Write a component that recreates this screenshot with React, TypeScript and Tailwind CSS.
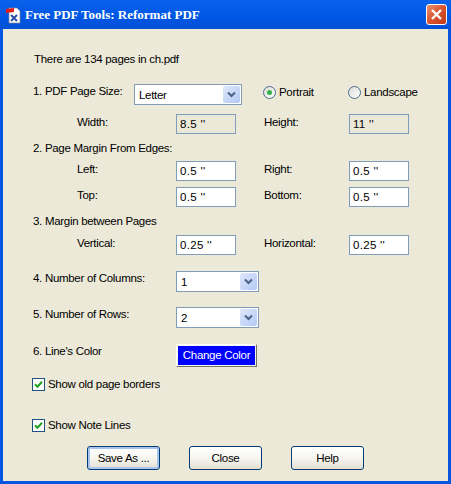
import type { ReactNode } from 'react'

function Arrow() {
  return (
    <span className="flex h-[17px] w-[17px] items-center justify-center rounded-[2px] bg-gradient-to-br from-[#dfe8fb] to-[#b2c8f5]">
      <svg width="9" height="7" viewBox="0 0 9 7">
        <path d="M1 1.5 L4.5 5 L8 1.5" fill="none" stroke="#4d6185" strokeWidth="2" />
      </svg>
    </span>
  )
}

function Select({ value, width }: { value: string; width: string }) {
  return (
    <div className={`flex h-[21px] items-center justify-between border border-[#7f9db9] bg-white pl-[4px] pr-[1px] ${width}`}>
      <span>{value}</span>
      <Arrow />
    </div>
  )
}

function Field({ value, disabled }: { value: string; disabled?: boolean }) {
  return (
    <div className={`flex h-[20px] w-[60px] items-center border border-[#7f9db9] pl-[3px] tracking-[0.3px] ${disabled ? 'bg-[#ebe8d8]' : 'bg-white'}`}>
      {value}
    </div>
  )
}

function Radio({ checked, label, width }: { checked?: boolean; label: string; width: string }) {
  return (
    <div className={`flex items-center gap-[3px] ${width}`}>
      <span className="flex h-[13px] w-[13px] shrink-0 items-center justify-center rounded-full border border-[#4e6b8f] bg-gradient-to-br from-[#dcdcd5] to-white">
        {checked && <span className="h-[5px] w-[5px] rounded-full bg-[#35b04a]" />}
      </span>
      <span>{label}</span>
    </div>
  )
}

function Check({ label, className }: { label: string; className: string }) {
  return (
    <div className={`flex h-[14px] items-center gap-[3px] pl-[29px] ${className}`}>
      <span className="flex h-[13px] w-[13px] items-center justify-center border border-[#1c5180] bg-white">
        <svg width="9" height="9" viewBox="0 0 9 9">
          <path d="M1 4.2 L3.5 6.7 L8 1.8" fill="none" stroke="#21a121" strokeWidth="2" />
        </svg>
      </span>
      <span>{label}</span>
    </div>
  )
}

function FieldRow({ a, b, x, y, className }: { a: string; b: string; x: ReactNode; y: ReactNode; className: string }) {
  return (
    <div className={`flex h-[20px] items-center ${className}`}>
      <span className="mb-[4px] w-[173px] pl-[74px] whitespace-nowrap">{a}</span>
      <span className="w-[60px]">{x}</span>
      <span className="mb-[4px] ml-[28px] w-[85px]">{b}</span>
      {y}
    </div>
  )
}

function Button({ label, focused }: { label: string; focused?: boolean }) {
  return (
    <button className={`h-[24px] w-[73px] rounded-[3px] border border-[#003c74] bg-gradient-to-b from-white via-[#f6f6f0] to-[#e3e0d3] text-black ${focused ? 'shadow-[inset_0_0_0_2px_#a9c4ee]' : ''}`}>
      {label}
    </button>
  )
}

export default function App() {
  return (
    <div className="flex h-[484px] w-[451px] flex-col overflow-hidden bg-[#0555e3] font-['Liberation_Sans',Arial,sans-serif] text-[11.5px] leading-[14px] tracking-[-0.3px] text-black">
      {/* title bar */}
      <div className="flex h-[29px] items-center bg-gradient-to-b from-[#0a62ea] via-[#0058e6] to-[#0350d8] pl-[5px] pr-[4px]">
        <svg width="17" height="18" viewBox="0 0 17 18">
          <path d="M4 2 H12 L15 5 V17 H4 Z" fill="#fff" stroke="#8a8a8a" strokeWidth="0.7" />
          <path d="M1 3 L9 2 V6 L1 7 Z" fill="#e01c1c" />
          <path d="M6 9 L12 15 M12 9 L6 15" stroke="#2a4fa8" strokeWidth="2" />
        </svg>
        <span className="ml-[3px] font-['Liberation_Serif',serif] text-[13px] font-bold tracking-normal text-white">Free PDF Tools: Reformat PDF</span>
        <span className="ml-auto flex h-[21px] w-[21px] items-center justify-center rounded-[3px] border border-white bg-gradient-to-br from-[#e8906f] via-[#d9532c] to-[#c23a16]">
          <svg width="13" height="13" viewBox="0 0 13 13">
            <path d="M2 2 L11 11 M11 2 L2 11" stroke="#fff" strokeWidth="2.4" />
          </svg>
        </span>
      </div>

      {/* dialog body */}
      <div className="mx-[3px] mb-[3px] flex-1 bg-[#ece9d8]">
        <div className="ml-[31px] mt-[23px] h-[14px]">There are 134 pages in ch.pdf</div>

        <div className="mt-[18px] flex h-[21px]">
          <span className="ml-[30px] w-[101px]">1. PDF Page Size:</span>
          <Select value="Letter" width="w-[108px]" />
          <div className="ml-[21px] mt-[1px] flex items-start">
            <Radio checked label="Portrait" width="w-[85px]" />
            <Radio label="Landscape" width="w-[72px]" />
          </div>
        </div>

        <FieldRow className="mt-[9px]" a="Width:" x={<Field value={'8.5 \'\''} disabled />} b="Height:" y={<Field value={'11 \'\''} disabled />} />

        <div className="ml-[30px] mt-[7px] h-[14px]">2. Page Margin From Edges:</div>
        <FieldRow className="mt-[6px]" a="Left:" x={<Field value={'0.5 \'\''} />} b="Right:" y={<Field value={'0.5 \'\''} />} />
        <FieldRow className="mt-[6px]" a="Top:" x={<Field value={'0.5 \'\''} />} b="Bottom:" y={<Field value={'0.5 \'\''} />} />

        <div className="ml-[30px] mt-[7px] h-[14px]">3. Margin between Pages</div>
        <FieldRow className="mt-[7px]" a="Vertical:" x={<Field value={'0.25 \'\''} />} b="Horizontal:" y={<Field value={'0.25 \'\''} />} />

        <div className="mt-[16px] flex h-[21px]">
          <span className="ml-[30px] w-[143px]">4. Number of Columns:</span>
          <Select value="1" width="w-[83px]" />
        </div>
        <div className="mt-[15px] flex h-[21px]">
          <span className="ml-[30px] w-[143px]">5. Number of Rows:</span>
          <Select value="2" width="w-[83px]" />
        </div>
        <div className="mt-[16px] flex h-[23px]">
          <span className="ml-[30px] w-[143px]">6. Line's Color</span>
          <button className="h-[23px] w-[81px] border border-white border-r-[#716f64] border-b-[#716f64] bg-[#0000ff] pb-[1px] text-white shadow-[inset_0_0_0_1px_#f4f3ec]">Change Color</button>
        </div>

        <Check className="mt-[10px]" label="Show old page borders" />
        <Check className="mt-[27px]" label="Show Note Lines" />

        <div className="ml-[84px] mt-[14px] flex gap-[29px]">
          <Button label="Save As ..." focused />
          <Button label="Close" />
          <Button label="Help" />
        </div>
      </div>
    </div>
  )
}
